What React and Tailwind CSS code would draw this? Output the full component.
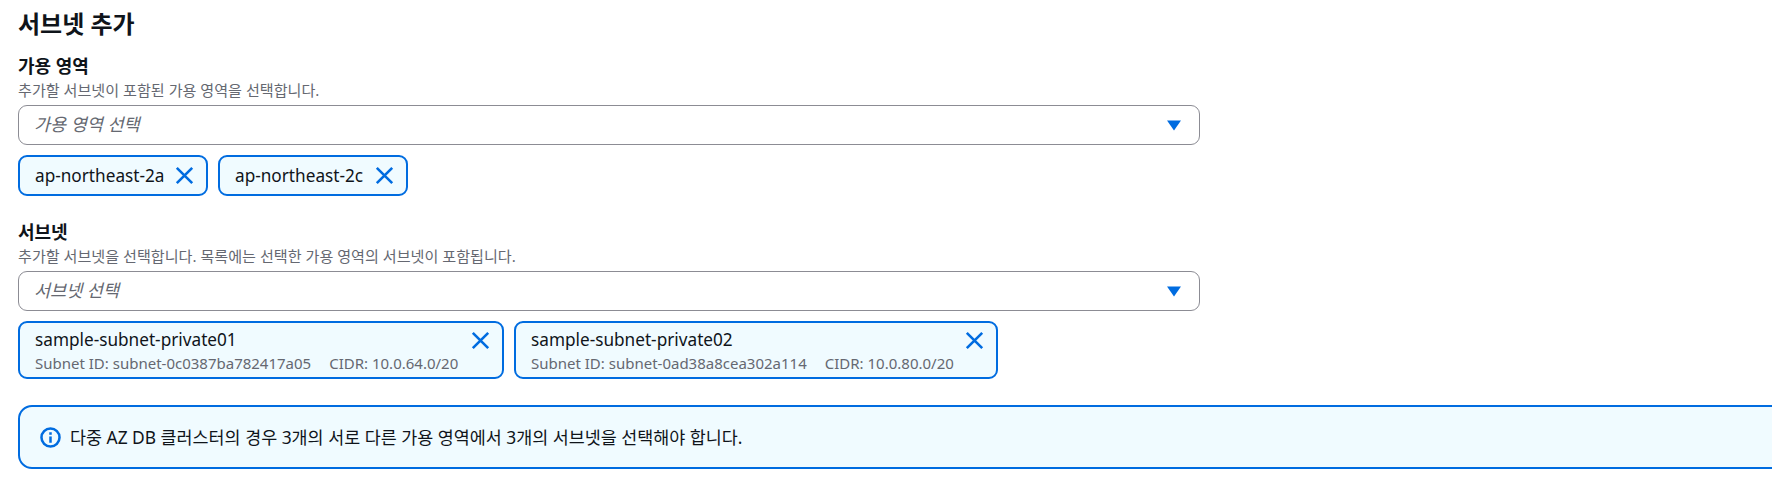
import React from "react";

function CloseIcon() {
  return (
    <svg width="19" height="19" viewBox="0 0 19 19" fill="none" stroke="#006ce0" strokeWidth="2.6" className="shrink-0">
      <path d="M1.8 1.8 17.2 17.2M17.2 1.8 1.8 17.2" />
    </svg>
  );
}

function Caret() {
  return (
    <svg width="14" height="11" viewBox="0 0 14 11" fill="#006ce0" className="shrink-0">
      <path d="M0 0.5h14L7 10.5z" />
    </svg>
  );
}

function SelectBox({ placeholder }) {
  return (
    <div className="flex items-center justify-between w-[1182px] h-10 rounded-[9px] border border-[#8c8c94] pl-[15px] pr-[18px] bg-white">
      <span className="italic text-[#656871] text-[17.5px] pb-[2px]">{placeholder}</span>
      <Caret />
    </div>
  );
}

function AzChip({ name, width }) {
  return (
    <div className={`flex items-center justify-between h-[41px] rounded-[9px] border-2 border-[#006ce0] bg-[#f0fbff] pl-[15px] pr-[12px] text-[17.2px] text-[#0f141a] ${width}`}>
      <span>{name}</span>
      <CloseIcon />
    </div>
  );
}

function SubnetChip({ name, id, cidr, width }) {
  return (
    <div className={`relative h-[58px] rounded-[9px] border-2 border-[#006ce0] bg-[#f0fbff] pl-[15px] pt-[5px] ${width}`}>
      <div className="text-[17.2px] leading-[24px] text-[#0f141a]">{name}</div>
      <div className="flex gap-[18px] text-[15px] leading-[20px] text-[#656871] mt-[1px]">
        <span>Subnet ID: {id}</span>
        <span>CIDR: {cidr}</span>
      </div>
      <div className="absolute right-[12px] top-[8px]">
        <CloseIcon />
      </div>
    </div>
  );
}

export default function App() {
  return (
    <div className="w-[1772px] h-[500px] overflow-hidden bg-white pl-[18px] font-['Noto_Sans','Noto_Sans_CJK_KR',sans-serif] text-[#0f141a]">
      <h1 className="text-2xl font-bold leading-[34px] pt-[7px]">서브넷 추가</h1>

      <div className="mt-[12px]">
        <div className="text-lg font-bold leading-[26px]">가용 영역</div>
        <div className="text-[15.1px] leading-[20px] mt-[1px] text-[#656871] mb-[5px]">추가할 서브넷이 포함된 가용 영역을 선택합니다.</div>
        <SelectBox placeholder="가용 영역 선택" />
        <div className="flex gap-[10px] mt-[10px]">
          <AzChip name="ap-northeast-2a" width="w-[190px]" />
          <AzChip name="ap-northeast-2c" width="w-[190px]" />
        </div>
      </div>

      <div className="mt-[23px]">
        <div className="text-lg font-bold leading-[26px]">서브넷</div>
        <div className="text-[15.1px] leading-[20px] mt-[1px] text-[#656871] mb-[5px]">추가할 서브넷을 선택합니다. 목록에는 선택한 가용 영역의 서브넷이 포함됩니다.</div>
        <SelectBox placeholder="서브넷 선택" />
        <div className="flex gap-[10px] mt-[10px]">
          <SubnetChip name="sample-subnet-private01" id="subnet-0c0387ba782417a05" cidr="10.0.64.0/20" width="w-[486px]" />
          <SubnetChip name="sample-subnet-private02" id="subnet-0ad38a8cea302a114" cidr="10.0.80.0/20" width="w-[484px]" />
        </div>
      </div>

      <div className="flex items-center gap-[9px] w-[1800px] h-[64px] mt-[26px] rounded-[14px] border-2 border-[#006ce0] bg-[#f0fbff] pl-[20px] text-[17.4px]">
        <svg width="21" height="21" viewBox="0 0 20 20" fill="none" stroke="#006ce0" strokeWidth="2.4" className="shrink-0">
          <circle cx="10" cy="10" r="8.6" />
          <path d="M10 9v6" />
          <path d="M10 5v2.4" />
        </svg>
        <span>다중 AZ DB 클러스터의 경우 3개의 서로 다른 가용 영역에서 3개의 서브넷을 선택해야 합니다.</span>
      </div>
    </div>
  );
}
